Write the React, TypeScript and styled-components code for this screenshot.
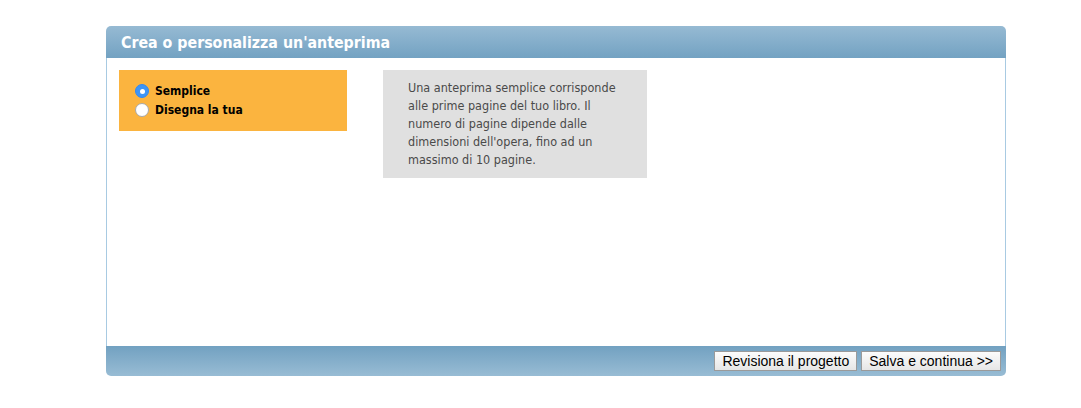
import React, {useState} from 'react';
import styled, {createGlobalStyle} from 'styled-components';

const GlobalStyle = createGlobalStyle`
  html, body {
    margin: 0;
    padding: 0;
    background: #fff;
  }
  body {
    font-family: "DejaVu Sans Condensed", "DejaVu Sans", Verdana, sans-serif;
    font-stretch: condensed;
  }
`
const Page = styled.div`
  width: 1081px;
  height: 408px;
  padding: 26px 0 0 106px;
  box-sizing: border-box;
`
const Panel = styled.div`
  width: 900px;
  display: flex;
  flex-direction: column;
  border-radius: 5px;
  overflow: hidden;
`
const Header = styled.div`
  height: 32px;
  display: flex;
  align-items: center;
  padding: 0 15px;
  background: linear-gradient(to bottom, #96bad3, #73a2c2);
`
const Title = styled.h1`
  margin: 0;
  font-size: 15.8px;
  font-weight: 700;
  color: #fff;
`
const Body = styled.div`
  height: 288px;
  box-sizing: border-box;
  border-left: 1px solid #a8cae2;
  border-right: 1px solid #a8cae2;
  background: #fff;
  padding: 12px 0 0 12px;
  display: flex;
  align-items: flex-start;
  gap: 36px;
`
const Choices = styled.div`
  width: 228px;
  height: 61px;
  box-sizing: border-box;
  background: #fbb43f;
  padding: 14px 0 0 16px;
  display: flex;
  flex-direction: column;
  gap: 4.5px;
`
const Choice = styled.label`
  display: flex;
  align-items: center;
  height: 14px;
  font-size: 12px;
  font-weight: 700;
  color: #000;
  cursor: pointer;
`
const Radio = styled.span<{checked: boolean}>`
  width: 14px;
  height: 14px;
  border-radius: 50%;
  box-sizing: border-box;
  margin-right: 6px;
  display: inline-flex;
  align-items: center;
  justify-content: center;
  background: ${p => p.checked ? '#3d95f6' : '#fff'};
  border: 1px solid ${p => p.checked ? '#3489ee' : '#a9a9a9'};
  &::after {
    content: '';
    width: 5px;
    height: 5px;
    border-radius: 50%;
    background: #fff;
    display: ${p => p.checked ? 'block' : 'none'};
  }
`
const Info = styled.div`
  width: 264px;
  box-sizing: border-box;
  background: #e0e0e0;
  padding: 9px 18px 9px 25px;
  font-size: 12.5px;
  line-height: 18px;
  color: #4a4a4a;
`
const Footer = styled.div`
  height: 30px;
  display: flex;
  align-items: center;
  justify-content: flex-end;
  gap: 4px;
  padding-right: 5px;
  background: linear-gradient(to bottom, #72a1c1, #98bcd4);
`
const Button = styled.button`
  height: 20px;
  padding: 0 7px;
  font-family: "Liberation Sans", Arial, sans-serif;
  font-stretch: normal;
  font-size: 14px;
  color: #000;
  background: linear-gradient(to bottom, #fcfcfc, #e6e6e6);
  border: 1px solid #9a9a9a;
  border-radius: 0;
  cursor: pointer;
`

const App = () => {
    const [mode, setMode] = useState('simple');
    return (
        <Page>
            <GlobalStyle/>
            <Panel>
                <Header>
                    <Title>Crea o personalizza un'anteprima</Title>
                </Header>
                <Body>
                    <Choices>
                        <Choice onClick={() => setMode('simple')}>
                            <Radio checked={mode === 'simple'}/>Semplice
                        </Choice>
                        <Choice onClick={() => setMode('custom')}>
                            <Radio checked={mode === 'custom'}/>Disegna la tua
                        </Choice>
                    </Choices>
                    <Info>
                        Una anteprima semplice corrisponde alle prime pagine del tuo libro. Il
                        numero di pagine dipende dalle dimensioni dell'opera, fino ad un
                        massimo di 10 pagine.
                    </Info>
                </Body>
                <Footer>
                    <Button>Revisiona il progetto</Button>
                    <Button>Salva e continua &gt;&gt;</Button>
                </Footer>
            </Panel>
        </Page>
    );
};

export default App;
